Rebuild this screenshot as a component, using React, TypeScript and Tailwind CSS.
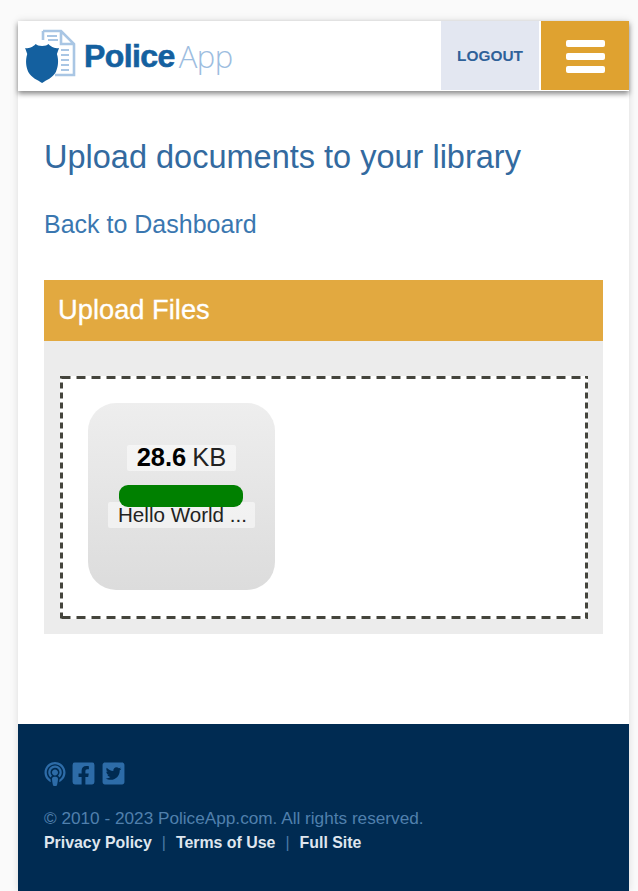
import React from 'react';
import { FaPodcast, FaFacebookSquare, FaTwitterSquare } from 'react-icons/fa';

// Shield + document mark of the logo
function LogoMark() {
  return (
    <svg width="54" height="56" viewBox="0 0 54 56" className="shrink-0">
      <g transform="translate(1 0)">
        <path
          d="M19 2 H37 L50 15 V46 H31 M19 2 V11 M37 2 V15 H50"
          fill="none"
          stroke="#a9c6e4"
          strokeWidth="2.6"
        />
        <path
          d="M23 7 H33 M24 11 H34 M37 21 H45 M37 26 H45 M37 31 H45 M37 36 H45 M37 41 H45"
          stroke="#a9c6e4"
          strokeWidth="2.2"
        />
      </g>
      <path
        transform="scale(1.06 1)"
        d="M2 19 C7 20 10 17 12 15 C13 16 15 17 18 17 C21 17 23 16 24 15 C26 17 29 20 34 19 L32 25 C34 32 33 38 31 43 C28 49 22 51 18 54 C14 51 8 49 5 43 C3 38 2 32 4 25 Z"
        fill="#14609f"
      />
    </svg>
  );
}

export default function App() {
  return (
    <div className="min-h-[891px] bg-[#fafafa] pt-[21px] pl-[18px] pr-[9px] font-['Liberation_Sans',Arial,sans-serif]">
      <div className="h-[870px] flex flex-col bg-white shadow-[0_0_8px_rgba(0,0,0,0.12)]">
        {/* Header */}
        <header className="relative z-10 h-[70px] flex items-stretch bg-white shadow-[0_3px_5px_rgba(0,0,0,0.45)]">
          <div className="flex-1 flex items-center pl-[5px] pt-[2px]">
            <LogoMark />
            <span className="ml-[7px] -mt-[2px] text-[#14609f] text-[32px] font-bold tracking-[-0.6px] leading-none [-webkit-text-stroke:0.6px_#14609f]">Police</span>
            <span className="ml-[4px] -mt-[2px] text-[#9dbde0] text-[31px] font-['Open_Sans',sans-serif] font-light tracking-[-0.5px] leading-none">App</span>
          </div>
          <a className="w-[98px] mb-[1px] flex items-center justify-center bg-[#e3e7f1] text-[#2f6199] text-[15.4px] font-bold">LOGOUT</a>
          <button className="w-[88px] ml-[2px] mb-[1px] pt-[2px] flex flex-col items-center justify-center gap-[6px] bg-[#dfa230]">
            <span className="block w-[39px] h-[7px] rounded-[2px] bg-white"></span>
            <span className="block w-[39px] h-[7px] rounded-[2px] bg-white"></span>
            <span className="block w-[39px] h-[7px] rounded-[2px] bg-white"></span>
          </button>
        </header>

        {/* Main */}
        <main className="flex-1 px-[26px] pt-[47px]">
          <h1 className="text-[32.5px] leading-[38px] text-[#336a9f]">Upload documents to your library</h1>
          <a className="block mt-[33px] text-[25px] leading-[30px] text-[#3a77b0]">Back to Dashboard</a>

          <div className="mt-[41px]">
            <div className="h-[61px] flex items-center px-[14px] bg-[#e2a940] text-white text-[27.3px] [-webkit-text-stroke:0.3px_#ffffff]">Upload Files</div>
            <div className="h-[293px] bg-[#ececec] pt-[35px] pl-[16px] pr-[15px]">
              {/* Dashes drawn as gradients: longer than what border-dashed gives */}
              <div className="h-[243px] pt-[27px] pl-[28px] bg-white [background:linear-gradient(90deg,#44443c_60%,transparent_0)_top/15px_3px_repeat-x,linear-gradient(90deg,#44443c_60%,transparent_0)_bottom/15px_3px_repeat-x,linear-gradient(#44443c_60%,transparent_0)_left/3px_10px_repeat-y,linear-gradient(#44443c_60%,transparent_0)_right/3px_10px_repeat-y,#ffffff]">
                {/* File preview */}
                <div className="relative w-[187px] h-[187px] rounded-[28px] bg-gradient-to-b from-[#eeeeee] to-[#dcdcdc]">
                  <div className="absolute left-[39px] top-[42px] w-[109px] h-[26px] flex items-center justify-center gap-[6px] rounded-[2px] bg-white/50 text-[25.5px] leading-none text-black">
                    <strong>28.6</strong>
                    <span className="text-[#222]">KB</span>
                  </div>
                  <div className="absolute left-[20px] top-[99px] w-[147px] h-[26px] px-[10px] flex items-center rounded-[2px] bg-white/50 text-[20.6px] leading-none text-[#222] whitespace-nowrap overflow-hidden">
                    Hello World ...
                  </div>
                  <div className="absolute left-[31px] top-[82px] w-[124px] h-[22px] rounded-[9px] bg-[#008000]"></div>
                </div>
              </div>
            </div>
          </div>
        </main>

        {/* Footer */}
        <footer className="h-[167px] bg-[#002b52] pt-[37px] px-[26px]">
          <div className="flex items-center gap-[5px] text-[#2d6ca8]">
            <FaPodcast className="w-[22px] h-[24px]" />
            <FaFacebookSquare className="w-[25px] h-[25px]" />
            <FaTwitterSquare className="w-[25px] h-[25px]" />
          </div>
          <p className="mt-[20px] text-[17.2px] leading-[24px] text-[#5080ad]">© 2010 - 2023 PoliceApp.com. All rights reserved.</p>
          <div className="flex items-center text-[15.9px] leading-[26px] font-bold text-[#dfe6ee]">
            <a>Privacy Policy</a>
            <span className="mx-[10px] font-normal text-[#4a7aa8]">|</span>
            <a>Terms of Use</a>
            <span className="mx-[10px] font-normal text-[#4a7aa8]">|</span>
            <a>Full Site</a>
          </div>
        </footer>
      </div>
    </div>
  );
}
